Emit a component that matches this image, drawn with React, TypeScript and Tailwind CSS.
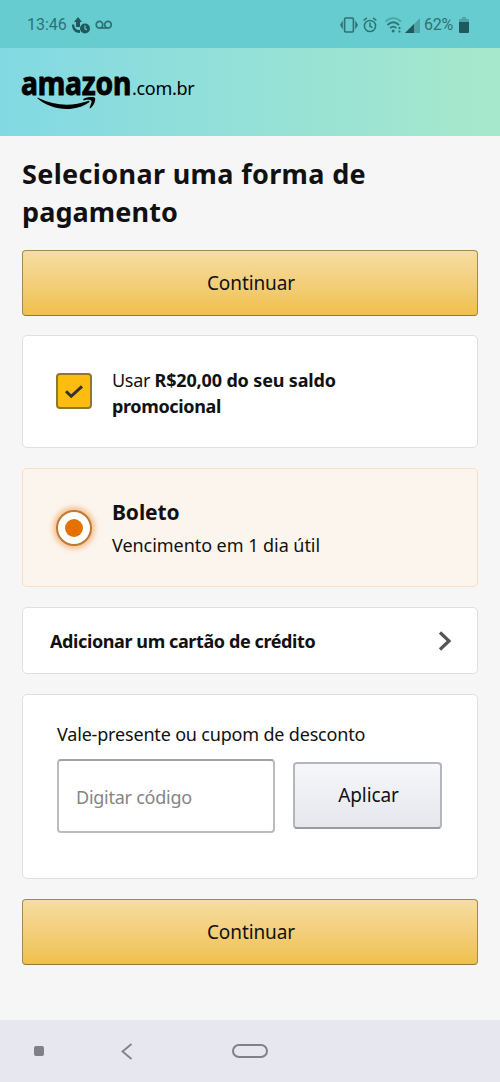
import type { ReactNode } from "react";

export default function App() {
  return (
    <div className="flex h-[1082px] w-[500px] flex-col overflow-hidden bg-[#f6f6f6] font-['Noto_Sans',sans-serif] text-[#111]">
      <StatusBar />
      <Header />
      <main className="flex flex-1 flex-col px-[22px] pt-[19px]">
        <h1 className="text-[27px] leading-[38px] font-bold tracking-[0.1px] whitespace-nowrap">
          <span className="tracking-[0.35px]">Selecionar uma forma de</span>
          <br />
          pagamento
        </h1>
        <ContinueButton className="mt-[19px]" />

        <Card className="mt-[19px] flex h-[113px] items-center pl-[33px]">
          <span className="-mt-px flex h-9 w-9 items-center justify-center rounded-[4px] border-2 border-[#8f7732] bg-[#fdbd10]">
            <svg className="mt-0.5" width="20" height="16" viewBox="0 0 20 16" fill="none" stroke="#333" strokeWidth="3">
              <path d="M2 7.2 7.2 12.3 18 2.3" />
            </svg>
          </span>
          <p className="mt-[3px] ml-5 text-[18px] leading-[26px] whitespace-nowrap">
            <span className="tracking-[-0.3px]">Usar </span>
            <b className="tracking-[-0.15px]">R$20,00 do seu saldo</b>
            <br />
            <b className="tracking-[-0.35px]">promocional</b>
          </p>
        </Card>

        <Card selected className="mt-5 flex h-[119px] items-center pl-[33px]">
          <span className="flex h-9 w-9 items-center justify-center rounded-full border-2 border-[#bd7a35] bg-white shadow-[0_0_5px_3px_rgba(240,140,50,0.5)]">
            <span className="h-[18px] w-[18px] rounded-full bg-[#e47100]" />
          </span>
          <div className="ml-5 whitespace-nowrap">
            <p className="text-[21px] leading-[34px] font-bold tracking-[-0.1px]">Boleto</p>
            <p className="text-[18px] leading-[32px] tracking-[-0.05px]">Vencimento em 1 dia útil</p>
          </div>
        </Card>

        <Card className="mt-5 flex h-[67px] items-center justify-between pr-[25px] pl-[27px]">
          <b className="pt-px text-[18px] tracking-[-0.4px] whitespace-nowrap">Adicionar um cartão de crédito</b>
          <svg width="14" height="20" viewBox="0 0 14 20" fill="none" stroke="#555" strokeWidth="3.2">
            <path d="M2 1.5 11 10 2 18.5" />
          </svg>
        </Card>

        <Card className="mt-5 h-[185px] px-[34px] pt-[26px]">
          <label htmlFor="code" className="block text-[18px] leading-[26px] tracking-[-0.18px] whitespace-nowrap">
            Vale-presente ou cupom de desconto
          </label>
          <div className="mt-3 flex items-start gap-[18px]">
            <input
              id="code"
              placeholder="Digitar código"
              className="h-[74px] w-[218px] rounded-[4px] border-2 border-[#bcbcbc] border-t-[#a2a2a2] bg-white pt-0.5 pl-[17px] text-[18px] tracking-[-0.25px] placeholder:text-[#858585]"
            />
            <button className="mt-[3px] h-[67px] w-[149px] rounded-[4px] border-2 border-[#b4b6bb] border-b-[#999ba2] bg-linear-to-b from-[#f6f7fa] to-[#e6e7ed] pl-0.5 text-[19px] tracking-[-0.1px]">
              Aplicar
            </button>
          </div>
        </Card>

        <ContinueButton className="mt-5" />
      </main>
      <NavBar />
    </div>
  );
}

function Card({ children, className, selected }: { children: ReactNode; className: string; selected?: boolean }) {
  return (
    <section
      className={`shrink-0 rounded-[5px] border ${selected ? "border-[#f6dfc4] bg-[#fcf5ee]" : "border-[#dfdfdf] bg-white"} ${className}`}
    >
      {children}
    </section>
  );
}

function ContinueButton({ className }: { className: string }) {
  return (
    <button
      className={`h-[66px] w-full shrink-0 rounded-[4px] border-[1.5px] border-[#a08a4c] border-b-[#8f7838] bg-linear-to-b from-[#f6dda2] to-[#f0c04a] pl-0.5 text-[19px] tracking-[-0.1px] ${className}`}
    >
      Continuar
    </button>
  );
}

function StatusBar() {
  return (
    <div className="flex h-12 shrink-0 items-center justify-between bg-[#66cccf] pt-0.5 pr-[31px] pl-[27px] font-[Roboto,sans-serif] text-[16px] text-[#2e7275]">
      <div className="flex items-center">
        <span className="w-[40px]">13:46</span>
        {/* download with a pending clock */}
        <svg className="ml-[5px]" width="18" height="17" viewBox="0 0 18 17" fill="#20595d">
          <path d="M6 0 10 5H8v5H4V5H2z" />
          <path d="M0 7.5h2.2C2.2 11 4 13 8 13v3C3 16 0 13 0 7.5z" />
          <circle cx="13" cy="11.5" r="5" />
          <path d="M13 8.5v3.3l2 1" fill="none" stroke="#66cccf" strokeWidth="1.2" />
        </svg>
        <svg className="ml-[5px]" width="18" height="10" viewBox="0 0 18 10" fill="none" stroke="#2e7275" strokeWidth="1.7">
          <circle cx="4.5" cy="4.7" r="3.3" />
          <circle cx="13" cy="4.7" r="3.3" />
          <path d="M4.5 8H13" />
        </svg>
      </div>
      <div className="flex items-center">
        <svg width="18" height="16" viewBox="0 0 18 16" fill="none" stroke="#2e7275" strokeWidth="1.6">
          <rect x="4.6" y="1" width="8.8" height="14" rx="1" />
          <path d="M2.8 3.5v9L0 8zM15.2 3.5v9L18 8z" fill="#2e7275" stroke="none" />
        </svg>
        <svg className="ml-[5px]" width="14" height="16" viewBox="0 0 14 16" fill="none" stroke="#2e7275" strokeWidth="1.5">
          <circle cx="7" cy="9" r="5.6" />
          <path d="M7 5.5V9.2l2.5 1.4M.6 3.5 3.8.9M13.4 3.5 10.2.9" />
        </svg>
        <svg className="ml-[8px]" width="17" height="16" viewBox="0 0 17 16" fill="none" stroke="#2e7275" strokeWidth="1.8">
          <path d="M.5 4.6C5-.1 11.5-.1 16 4.6" stroke="#4da3a6" />
          <path d="M2.5 8Q8.2 2.5 14 8M5.2 11Q8.2 8.2 11.3 11" />
          <circle cx="8.2" cy="14" r="1.5" fill="#2e7275" stroke="none" />
          <path d="M14.5 10v2M14.5 13.5v2" />
        </svg>
        <svg className="ml-[3px]" width="15" height="15" viewBox="0 0 15 15">
          <path d="M15 0v15H0z" fill="#4da3a6" />
          <path d="M9 6v9H0z" fill="#20595d" />
        </svg>
        <span className="ml-[4px] w-[31px] tracking-[-0.3px]">62%</span>
        <svg className="ml-[4px]" width="10" height="16" viewBox="0 0 10 16">
          <path d="M3 0h4v2h3v3H0V2h3z" fill="#4da3a6" />
          <path d="M0 5h10v10q0 1-1 1H1q-1 0-1-1z" fill="#20595d" />
        </svg>
      </div>
    </div>
  );
}

function Header() {
  return (
    <header className="h-[88px] shrink-0 bg-linear-to-r from-[#82d9e3] to-[#a6e8cb] pt-[17px] pl-[21px]">
      <div className="flex h-[38px] items-baseline text-black">
        <span className="w-[111px]">
          <span className="inline-block origin-left scale-x-[0.855] text-[33px] leading-[36px] font-bold tracking-[-0.2px] [-webkit-text-stroke:1px_#000]">
            amazon
          </span>
        </span>
        <span className="text-[18px] leading-[36px] tracking-[-0.3px]">.com.br</span>
      </div>
      {/* smile arrow under the wordmark */}
      <svg className="-mt-[6px] ml-[16px]" width="60" height="14" viewBox="0 0 60 14">
        <path d="M.3 1.3C0 .7.8.5 1.5 1 18 9 35 9.500 51 4c1.500-.5 2 .5.8 1.500C39 15 15 14.500.3 1.300z" />
        <path d="M46.500 2C50-.2 57-.5 58 1c1 1.700-.8 7.200-4.200 10-1 .7-1.500.3-1-.8 1.100-2.700 2.200-5.500 1.500-6.500-.7-1-4-1-6.900-.5-1.200.1-1.600-.5-.9-1.200z" />
      </svg>
    </header>
  );
}

function NavBar() {
  return (
    <nav className="flex h-[62px] shrink-0 items-center bg-[#e7e7ef] pl-[34px]">
      <span className="h-[10px] w-[10px] rounded-[2px] bg-[#808086]" />
      <svg className="ml-[77px]" width="12" height="17" viewBox="0 0 12 17" fill="none" stroke="#808086" strokeWidth="1.8">
        <path d="M10.5 1 1.5 8.5l9 7.5" />
      </svg>
      <span className="ml-[99px] h-[14px] w-9 rounded-full border-2 border-[#808086]" />
    </nav>
  );
}
